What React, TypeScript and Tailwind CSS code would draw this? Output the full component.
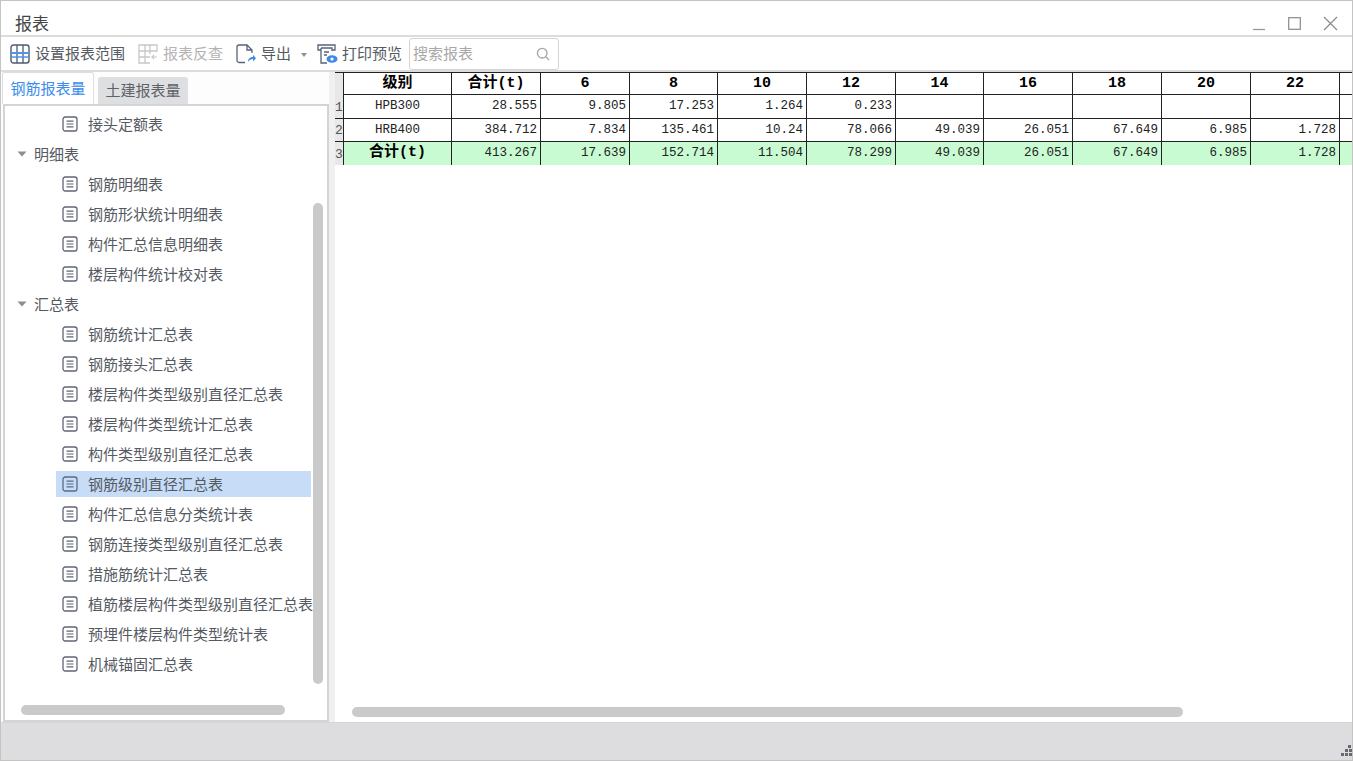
import React from "react";

const cjk = { fontFamily: '"Noto Sans CJK SC", "Noto Sans", sans-serif' };
const mono = { fontFamily: '"Liberation Mono", "Noto Sans CJK SC", monospace' };

const DocIcon = ({ active }: { active?: boolean }) => (
  <svg width="16" height="16" viewBox="0 0 16 16" fill="none" className="shrink-0">
    <rect x="1" y="1" width="14" height="14" rx="2.2" stroke={active ? "#5b6b85" : "#5f6675"} strokeWidth="1.3" />
    <path d="M4.5 5.2h7M4.5 8h7M4.5 10.8h7" stroke={active ? "#5b6b85" : "#5f6675"} strokeWidth="1.2" />
  </svg>
);

const Leaf = ({ label, active }: { label: string; active?: boolean }) => (
  <div className="h-[30px] flex items-center pl-[51px]">
    <div className={`h-[26px] flex items-center pl-[6px] w-[255px] whitespace-nowrap ${active ? "bg-[#c6dcf7]" : ""}`}>
      <DocIcon active={active} />
      <span className="ml-[10px] text-[15px] text-[#555a62]">{label}</span>
    </div>
  </div>
);

const Group = ({ label }: { label: string }) => (
  <div className="h-[30px] flex items-center pl-[12px]">
    <svg width="10" height="6" viewBox="0 0 10 6" className="shrink-0">
      <path d="M0.5 0.5h9L5 5.5z" fill="#8a8d92" />
    </svg>
    <span className="ml-[7px] text-[15px] text-[#555a62]">{label}</span>
  </div>
);

const widths = [108, 89, 89, 88, 89, 89, 88, 89, 89, 89, 89];
const header = ["级别", "合计(t)", "6", "8", "10", "12", "14", "16", "18", "20", "22", ""];
const rows = [
  ["HPB300", "28.555", "9.805", "17.253", "1.264", "0.233", "", "", "", "", "", ""],
  ["HRB400", "384.712", "7.834", "135.461", "10.24", "78.066", "49.039", "26.051", "67.649", "6.985", "1.728", ""],
  ["合计(t)", "413.267", "17.639", "152.714", "11.504", "78.299", "49.039", "26.051", "67.649", "6.985", "1.728", ""],
];

const colGrid = "grid grid-cols-[8px_108px_89px_89px_88px_89px_89px_88px_89px_89px_89px_89px_14px]";

const Report = () => (
  <div className="text-[#222]" style={mono}>
    <div className={`${colGrid} h-[23px] border-t border-b border-[#222]`}>
      <div className="bg-[#e8e8e8] border-t-0" />
      {header.map((h, i) => (
        <div key={i} className={`flex items-center justify-center font-bold text-[15px] text-black border-l border-[#222] ${i === 11 ? "" : ""}`}>
          {h}
        </div>
      ))}
    </div>
    {rows.map((r, ri) => (
      <div key={ri} className={`${colGrid} border-b border-[#222] ${ri === 0 ? "h-[24px]" : "h-[23px]"}`}>
        <div className="bg-[#e8e8e8] flex items-end text-[13px] text-[#555] leading-[20px] -mr-px">{ri + 1}</div>
        {r.map((c, i) => (
          <div
            key={i}
            className={`flex items-center border-l border-[#222] text-[12.5px] ${ri === 2 ? "bg-[#c9fbd3]" : ""} ${
              i === 0 ? "justify-center" : "justify-end pr-[3px]"
            } ${ri === 2 && i === 0 ? "font-bold text-[15px] text-black" : ""}`}
          >
            {c}
          </div>
        ))}
      </div>
    ))}
  </div>
);

export default function App() {
  return (
    <div className="w-[1353px] h-[761px] bg-white border border-[#c4c4c4] flex flex-col overflow-hidden" style={cjk}>
      <div className="h-[36px] shrink-0 flex items-center justify-between border-b-2 border-[#dcdcdc]">
        <span className="ml-[14px] mt-[10px] text-[17px] text-[#444]">报表</span>
        <div className="flex items-center mr-[14px] mt-[11px] gap-[22px]">
          <svg width="14" height="14" viewBox="0 0 14 14"><path d="M1 12.5h12" stroke="#9a9a9a" strokeWidth="1.3" /></svg>
          <svg width="13" height="13" viewBox="0 0 13 13"><rect x="0.7" y="0.7" width="11.6" height="11.6" fill="none" stroke="#8a8a8a" strokeWidth="1.2" /></svg>
          <svg width="15" height="15" viewBox="0 0 15 15"><path d="M1 1l13 13M14 1L1 14" stroke="#8a8a8a" strokeWidth="1.2" /></svg>
        </div>
      </div>

      <div className="h-[35px] shrink-0 flex items-center border-b-2 border-[#dcdcdc] text-[15px] text-[#555a62] whitespace-nowrap">
        <svg width="20" height="20" viewBox="0 0 20 20" fill="none" className="ml-[9px]">
          <rect x="1" y="1" width="18" height="18" rx="2.5" stroke="#4d5b70" strokeWidth="1.4" />
          <path d="M7 1v18M13 1v18" stroke="#4d5b70" strokeWidth="1.3" />
          <path d="M1 9h18" stroke="#4d94ea" strokeWidth="2" />
          <path d="M1 13h18" stroke="#4d94ea" strokeWidth="1.5" />
        </svg>
        <span className="ml-[5px]">设置报表范围</span>
        <svg width="20" height="20" viewBox="0 0 20 20" fill="none" className="ml-[13px]">
          <path d="M12 10V1H1v18h11M1 7h11M1 13h11M7 1v18M12 1h7v6h-7" stroke="#c8c8c8" strokeWidth="1.3" />
          <path d="M19 13h-5l2-2M14 13l2 2" stroke="#c8c8c8" strokeWidth="1.2" />
        </svg>
        <span className="ml-[5px] text-[#b4b4b4]">报表反查</span>
        <svg width="20" height="20" viewBox="0 0 20 20" fill="none" className="ml-[13px]">
          <path d="M9 18.5H3a2 2 0 0 1-2-2V3a2 2 0 0 1 2-2h8l5 5v3M11 1v5h5" stroke="#58627a" strokeWidth="1.3" />
          <path d="M12 18c0-3.5 2-5 5-5v-2.2l3 3.4-3 3.3V15c-2 0-3.500.8-5 3z" fill="#3f8ae6" />
        </svg>
        <span className="ml-[5px]">导出</span>
        <svg width="6" height="4" viewBox="0 0 6 4" className="ml-[10px] mt-[2px]"><path d="M0 0h6L3 4z" fill="#909090" /></svg>
        <svg width="21" height="20" viewBox="0 0 21 20" fill="none" className="ml-[10px]">
          <path d="M4 6H1V1h17v5h-3M4 4h11v3M4 4v15h6M7 8h5M7 11h3" stroke="#58627a" strokeWidth="1.3" />
          <ellipse cx="15" cy="15" rx="5.500" ry="3.800" fill="#3f8ae6" />
          <circle cx="15" cy="15" r="1.600" fill="#fff" />
        </svg>
        <span className="ml-[4px]">打印预览</span>
        <div className="ml-[7px] w-[150px] h-[32px] rounded-[3px] border border-[#d4d4d4] flex items-center justify-between px-[3px] text-[#a8a8a8]">
          <span>搜索报表</span>
          <svg width="14" height="14" viewBox="0 0 14 14" fill="none" className="mr-[5px]">
            <circle cx="6.200" cy="6.200" r="4.800" stroke="#a4a4a4" strokeWidth="1.3" />
            <path d="M10 10l3 3" stroke="#a4a4a4" strokeWidth="1.3" />
          </svg>
        </div>
      </div>

      <div className="flex-1 min-h-0 flex">
        <div className="w-[328px] shrink-0 flex flex-col bg-[#fdfdfd]">
          <div className="h-[32px] shrink-0 flex items-end pl-[1px] text-[15px]">
            <div className="w-[92px] h-[32px] flex items-center justify-center bg-white border border-b-0 border-[#dedede] rounded-t-[3px] text-[#3b8cec]">钢筋报表量</div>
            <div className="ml-[4px] w-[90px] h-[27px] flex items-center justify-center bg-[#dedfe1] rounded-t-[3px] text-[#5e6168]">土建报表量</div>
          </div>
          <div className="relative flex-1 min-h-0 ml-[2px] bg-white border-2 border-[#d4d4d4] overflow-hidden">
            <div className="pt-[3px]">
              <Leaf label="接头定额表" />
              <Group label="明细表" />
              <Leaf label="钢筋明细表" />
              <Leaf label="钢筋形状统计明细表" />
              <Leaf label="构件汇总信息明细表" />
              <Leaf label="楼层构件统计校对表" />
              <Group label="汇总表" />
              <Leaf label="钢筋统计汇总表" />
              <Leaf label="钢筋接头汇总表" />
              <Leaf label="楼层构件类型级别直径汇总表" />
              <Leaf label="楼层构件类型统计汇总表" />
              <Leaf label="构件类型级别直径汇总表" />
              <Leaf label="钢筋级别直径汇总表" active />
              <Leaf label="构件汇总信息分类统计表" />
              <Leaf label="钢筋连接类型级别直径汇总表" />
              <Leaf label="措施筋统计汇总表" />
              <Leaf label="植筋楼层构件类型级别直径汇总表" />
              <Leaf label="预埋件楼层构件类型统计表" />
              <Leaf label="机械锚固汇总表" />
            </div>
            <div className="absolute left-[308px] top-[97px] w-[10px] h-[481px] rounded-full bg-[#cacaca]" />
            <div className="absolute left-[16px] top-[599px] w-[264px] h-[10px] rounded-full bg-[#cacaca]" />
          </div>
        </div>
        <div className="w-[6px] shrink-0 bg-[#f0f0f0]" />
        <div className="relative flex-1 min-w-0 overflow-hidden bg-white">
          <Report />
          <div className="absolute left-[17px] top-[635px] w-[831px] h-[10px] rounded-full bg-[#cacaca]" />
        </div>
      </div>

      <div className="relative h-[38px] shrink-0 bg-[#dddde0] border-t border-[#d6d6d6]">
        <svg width="12" height="12" viewBox="0 0 12 12" className="absolute right-0 bottom-[3px]" fill="#666a70">
          <rect x="8" y="0" width="3" height="3" /><rect x="5" y="4" width="3" height="3" /><rect x="9" y="4" width="3" height="3" />
          <rect x="1" y="8" width="3" height="3" /><rect x="5" y="8" width="3" height="3" /><rect x="9" y="8" width="3" height="3" />
        </svg>
      </div>
    </div>
  );
}
